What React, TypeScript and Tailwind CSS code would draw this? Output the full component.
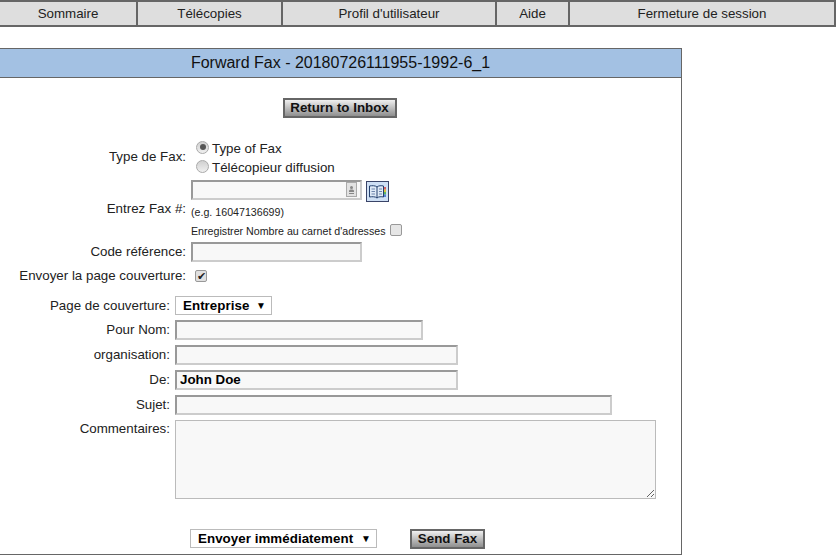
import { ReactNode } from 'react';

const navItems = [
  { name: 'Sommaire', width: 'w-[138px]' },
  { name: 'Télécopies', width: 'w-[145px]' },
  { name: "Profil d'utilisateur", width: 'w-[214px]' },
  { name: 'Aide', width: 'w-[73px]' },
  { name: 'Fermeture de session', width: 'w-[266px]' },
];

const fieldClass =
  'h-5 border-2 border-t-[#999] border-l-[#999] border-r-[#ccc] border-b-[#ccc] bg-[#f8f8f8] px-[3px] text-[13.33px] font-bold text-black outline-none';

const buttonClass =
  'h-5 border-2 border-[#666] bg-gradient-to-b from-[#f0f0f0] to-[#8f8f8f] text-[13.33px] font-bold text-[#111] flex items-center justify-center';

const Radio = ({ checked }: { checked?: boolean }) => (
  <span className="w-[13px] h-[13px] rounded-full border border-[#aaa] bg-gradient-to-b from-[#d0d0d0] to-[#f0f0f0] flex items-center justify-center">
    {checked && <span className="w-[6px] h-[6px] rounded-full bg-[#555]" />}
  </span>
);

const Row = ({ label, children, labelWidth, className }: { label: string; children: ReactNode; labelWidth: string; className: string }) => (
  <div className={`flex items-center gap-[5px] ${className}`}>
    <div className={`${labelWidth} text-right`}>{label}</div>
    {children}
  </div>
);

const Select = ({ value, width }: { value: string; width: string }) => (
  <div className={`${width} h-[19px] border border-[#bbb] bg-white flex items-center justify-between pl-[6px] pr-[5px] text-[13.33px] font-bold text-black whitespace-nowrap`}>
    <span className="tracking-[0.05px] ml-[1px]">{value}</span>
    <span className="text-[10px] leading-none">▼</span>
  </div>
);

const App = () => {
  return (
    <div className="w-[837px] h-[555px] bg-white overflow-hidden text-[13.33px] text-[#222]" style={{ fontFamily: '"Liberation Sans", Arial, sans-serif' }}>
      {/* Top nav */}
      <div className="flex">
        {navItems.map((item) => (
          <div key={item.name} className={`${item.width} h-[27px] border-2 border-[#666] border-l-0 bg-[#dedede] flex items-center justify-center`}>
            {item.name}
          </div>
        ))}
      </div>

      {/* Panel */}
      <div className="mt-[21px] w-[682px] h-[507px] border border-l-0 border-[#666]">
        <div className="h-[29px] bg-[#a3c1e3] border-b border-[#666] flex items-center justify-center text-base text-[#111]">
          Forward Fax - 20180726111955-1992-6_1
        </div>

        <div className="mt-[20px] flex justify-center pr-[2px]">
          <button className={`${buttonClass} w-[114px]`}>Return to Inbox</button>
        </div>

        <Row label="Type de Fax:" labelWidth="w-[186px]" className="mt-[20px]">
          <div className="flex flex-col gap-[1px] pl-[5px]">
            <div className="flex items-center gap-[3px] h-[18px]">
              <Radio checked />
              <span className="mt-[3px]">Type of Fax</span>
            </div>
            <div className="flex items-center gap-[3px] h-[18px]">
              <Radio />
              <span className="mt-[3px]">Télécopieur diffusion</span>
            </div>
          </div>
        </Row>

        <Row label="Entrez Fax #:" labelWidth="w-[186px]" className="mt-[5px]">
          <div>
            <div className="flex items-start gap-1">
              <div className="relative">
                <input className={`${fieldClass} w-[171px] block`} />
                <span className="absolute right-[5px] top-[2px] w-[11px] h-[15px] border border-[#aaa] bg-[#e2e2e2] flex items-center justify-center">
                  <svg width="7" height="10" viewBox="0 0 7 10" fill="#888">
                    <circle cx="3.500" cy="2.500" r="1.500" />
                    <path d="M1 7V6C1 5 2 4.500 3.500 4.500S6 5 6 6V7z" />
                    <path d="M1 8H6V9H1z" />
                  </svg>
                </span>
              </div>
              <div className="w-[23px] h-[21px] mt-[1px] border border-[#3a4468] bg-[#cfe0f5] flex items-center justify-center">
                <svg width="19" height="15" viewBox="0 0 19 15" fill="none">
                  <path d="M9 3C7.500 1.500 4 1.500 1.500 2V13C4 12.500 7.500 12.500 9 14C10.500 12.500 13.500 12.500 15.500 13V2C13.500 1.500 10.500 1.500 9 3Z" fill="#dfeaf7" stroke="#24406e" />
                  <path d="M9 3V14" stroke="#24406e" />
                  <path d="M3.500 5H7M3.500 7.500H7M3.500 10H7M11 5H14M11 7.500H14M11 10H14" stroke="#6f86ad" />
                  <path d="M17 3V5.500" stroke="#d33" strokeWidth="1.500" />
                  <path d="M17 5.500V8" stroke="#e5b400" strokeWidth="1.500" />
                  <path d="M17 8V10.500" stroke="#3a3" strokeWidth="1.500" />
                  <path d="M17 10.500V13" stroke="#36c" strokeWidth="1.500" />
                </svg>
              </div>
            </div>
            <div className="text-[10.67px] leading-[12px] mt-[4px]">(e.g. 16047136699)</div>
            <div className="flex items-center gap-1 mt-[6px] h-[14px] text-[10.67px]">
              Enregistrer Nombre au carnet d'adresses
              <span className="w-[12px] h-[12px] rounded-[2px] border border-[#999] bg-[#e6e6e6] -mt-[3px]" />
            </div>
          </div>
        </Row>

        <Row label="Code référence:" labelWidth="w-[186px]" className="mt-[4px]">
          <input className={`${fieldClass} w-[171px]`} />
        </Row>

        <Row label="Envoyer la page couverture:" labelWidth="w-[186px]" className="mt-[5px] h-[18px]">
          <span className="ml-1 w-[12px] h-[12px] rounded-[2px] border border-[#999] bg-[#e0e0e0] flex items-center justify-center text-[11px] leading-none text-[#222]">✔</span>
        </Row>

        <Row label="Page de couverture:" labelWidth="w-[170px]" className="mt-[11px]">
          <Select value="Entreprise" width="w-[97px]" />
        </Row>
        <Row label="Pour Nom:" labelWidth="w-[170px]" className="mt-[4px]">
          <input className={`${fieldClass} w-[248px]`} />
        </Row>
        <Row label="organisation:" labelWidth="w-[170px]" className="mt-[5px]">
          <input className={`${fieldClass} w-[283px]`} />
        </Row>
        <Row label="De:" labelWidth="w-[170px]" className="mt-[5px]">
          <input className={`${fieldClass} w-[283px]`} defaultValue="John Doe" />
        </Row>
        <Row label="Sujet:" labelWidth="w-[170px]" className="mt-[5px]">
          <input className={`${fieldClass} w-[437px]`} />
        </Row>
        <div className="flex gap-[5px] mt-[5px]">
          <div className="w-[170px] text-right -mt-[1px]">Commentaires:</div>
          <textarea className="w-[481px] h-[79px] block border border-[#bbb] bg-[#f8f8f8] outline-none" />
        </div>

        <div className="flex items-center gap-[33px] mt-[30px] pl-[190px]">
          <Select value="Envoyer immédiatement" width="w-[187px]" />
          <button className={`${buttonClass} w-[75px]`}>Send Fax</button>
        </div>
      </div>
    </div>
  );
};

export default App;
